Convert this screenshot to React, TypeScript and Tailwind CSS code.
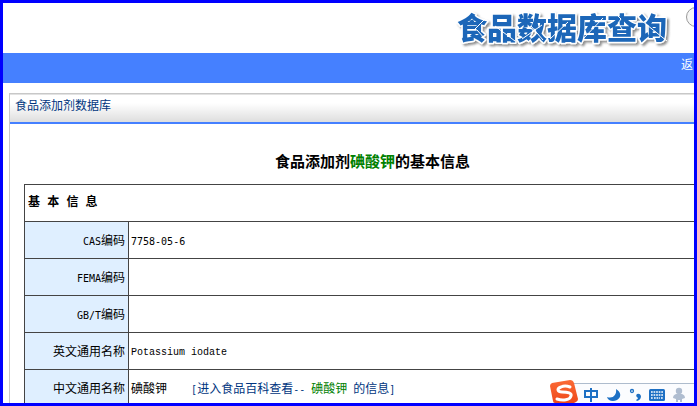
import type { ReactNode } from "react";
import { clsx } from "clsx";

interface InfoRow {
  code?: string;
  label: string;
  value?: ReactNode;
}

// Latin letters and digits are half as wide as the Chinese ones beside them
function Half({ children, serif = false }: { children: string; serif?: boolean }) {
  return (
    <span
      className={clsx(
        "whitespace-pre text-[10px]",
        serif
          ? "font-['Liberation_Mono','DejaVu_Sans_Mono',monospace]"
          : "font-['DejaVu_Sans_Mono','Liberation_Mono',monospace]",
      )}
    >
      {children}
    </span>
  );
}

const ROWS: InfoRow[] = [
  { code: "CAS", label: "编码", value: <Half>7758-05-6</Half> },
  { code: "FEMA", label: "编码" },
  { code: "GB/T", label: "编码" },
  { label: "英文通用名称", value: <Half serif>Potassium iodate</Half> },
  {
    label: "中文通用名称",
    value: (
      <>
        碘酸钾<Half>{"    "}</Half>
        <a href="#wiki" className="text-[#003580]">
          <Half>[</Half>进入食品百科查看<Half>-- </Half>
          <span className="text-[#008000]">碘酸钾</span>
          <Half> </Half>的信息<Half>]</Half>
        </a>
      </>
    ),
  },
];

function SiteLogo() {
  return (
    <svg width="220" height="50" viewBox="0 0 220 50" role="img" aria-label="食品数据库查询">
      <defs>
        <filter id="logo-shadow" x="-5%" y="-20%" width="110%" height="150%">
          <feDropShadow dx="2" dy="2" stdDeviation="1" floodColor="#444" floodOpacity="0.6" />
        </filter>
      </defs>
      <g
        className="font-['Noto_Sans_CJK_SC',sans-serif] font-black"
        fontSize="30"
        strokeLinejoin="round"
      >
        <text
          x="3"
          y="36"
          fill="#1a66b8"
          stroke="#fff"
          strokeWidth="3"
          paintOrder="stroke"
          filter="url(#logo-shadow)"
        >
          食品数据库查询
        </text>
      </g>
      {/* scratches across the letters */}
      <path
        d="M21 26 32 15M23 27l9 10M41 23l20 15M68 36l20-14M77 23l12 14M96 36l18-17M129 36l20-21M163 12l4 4-3 4 4 6M188 18l25 20"
        fill="none"
        stroke="#fff"
        strokeWidth="1"
      />
    </svg>
  );
}

function InputBar() {
  return (
    <div className="absolute right-0 bottom-0 flex h-6 items-end">
      <svg width="147" height="24" viewBox="0 0 147 24" aria-hidden="true">
        <defs>
          <linearGradient id="sogou" x1="0" y1="0" x2="0" y2="1">
            <stop offset="0" stopColor="#fb6a35" />
            <stop offset="1" stopColor="#ee4a1c" />
          </linearGradient>
        </defs>
        <path d="M14 4h133v20H14z" fill="#fbfcfe" />
        <path d="M24 4.500h123" stroke="#aebccd" />
        <path
          d="M5 4 23 1q3 0 4 3l4 16q0 2-2 3l-2 1H8q-2 0-2-2L3 7q0-2 2-3Z"
          fill="url(#sogou)"
        />
        <path
          d="M23 8q-5-2-9 0c-5 2-3 5 1 5 6 0 10 1 9 4-1 4-8 5-14 3"
          fill="none"
          stroke="#fff"
          strokeWidth="3"
          strokeLinecap="round"
        />
        <path d="M38 12h12v6H38zM44 9v14" fill="none" stroke="#1d70c4" strokeWidth="2" />
        <path d="M69 10c5 3 6 8 1 11-4 2-9 1-10-3 6 2 10-2 9-8Z" fill="#1d70c4" />
        <circle cx="85" cy="12" r="1.500" fill="none" stroke="#1d70c4" strokeWidth="1.300" />
        <path d="M90 15q3-1 4 2 0 4-4 5l-1-1q2-1 2-2-3-2-1-4Z" fill="#1d70c4" />
        <rect x="102" y="10" width="16" height="12" rx="1.500" fill="#1d70c4" />
        <path
          d="M104 13h12M104 16h12M104 19h2M107 19h6M114 19h2"
          stroke="#fff"
          strokeWidth="1.500"
          strokeDasharray="1.700 0.870"
        />
        <g fill="#afbdd0">
          <circle cx="132" cy="12" r="3.200" />
          <path d="M129 15h6q3 1 3 4l-3 1v3h-2v-2h-2v2h-2v-3l-3-1q0-3 3-4Z" />
        </g>
      </svg>
    </div>
  );
}

export default function App() {
  return (
    <div className="relative h-screen overflow-hidden border-[3px] border-[#0000ff] bg-white font-['Noto_Sans_CJK_SC',sans-serif] text-xs text-black">
      <header className="relative flex h-[50px] items-start justify-end pr-5">
        <SiteLogo />
        <span className="absolute top-1 -right-3 size-5 rounded-full border border-[#999] bg-[#f6f6f6]" />
      </header>

      <nav className="flex h-[30px] justify-end bg-[#4580ff] pt-[3px] pr-px">
        <a href="#back" className="leading-4 text-white">
          返
        </a>
      </nav>

      {/* the panel is wider than the window and runs out on the right */}
      <main className="mt-[10px] -mr-[42px] ml-[6px] border border-[#c8c8c8]">
        <h2 className="h-[30px] border-t border-b-2 border-t-[#e2e2e2] border-b-[#4580ff] bg-linear-to-b from-white from-30% to-[#dedede] pl-[5px] leading-5 text-[#003580]">
          食品添加剂数据库
        </h2>

        <h1 className="pt-[26px] pb-[12px] text-center text-[15px] leading-[22px] font-bold">
          食品添加剂<span className="text-[#008000]">碘酸钾</span>的基本信息
        </h1>

        <div className="px-[14px]">
          <table className="w-full border-collapse border border-[#444]">
            <thead>
              <tr className="h-[37px]">
                <th
                  colSpan={2}
                  className="border border-[#444] pl-[3px] text-left font-['Liberation_Mono','Noto_Sans_CJK_SC',monospace] font-bold"
                >
                  基 本 信 息
                </th>
              </tr>
            </thead>
            <tbody>
              {ROWS.map(({ code, label, value }) => (
                <tr key={(code ?? "") + label} className="h-[37px]">
                  <th
                    scope="row"
                    className="w-[104px] border border-[#444] bg-[#dfefff] pr-[3px] text-right font-normal"
                  >
                    {code && <Half>{code}</Half>}
                    {label}
                  </th>
                  <td className="border border-[#444] pl-[2px]">{value}</td>
                </tr>
              ))}
            </tbody>
          </table>
        </div>
      </main>

      <InputBar />
    </div>
  );
}
